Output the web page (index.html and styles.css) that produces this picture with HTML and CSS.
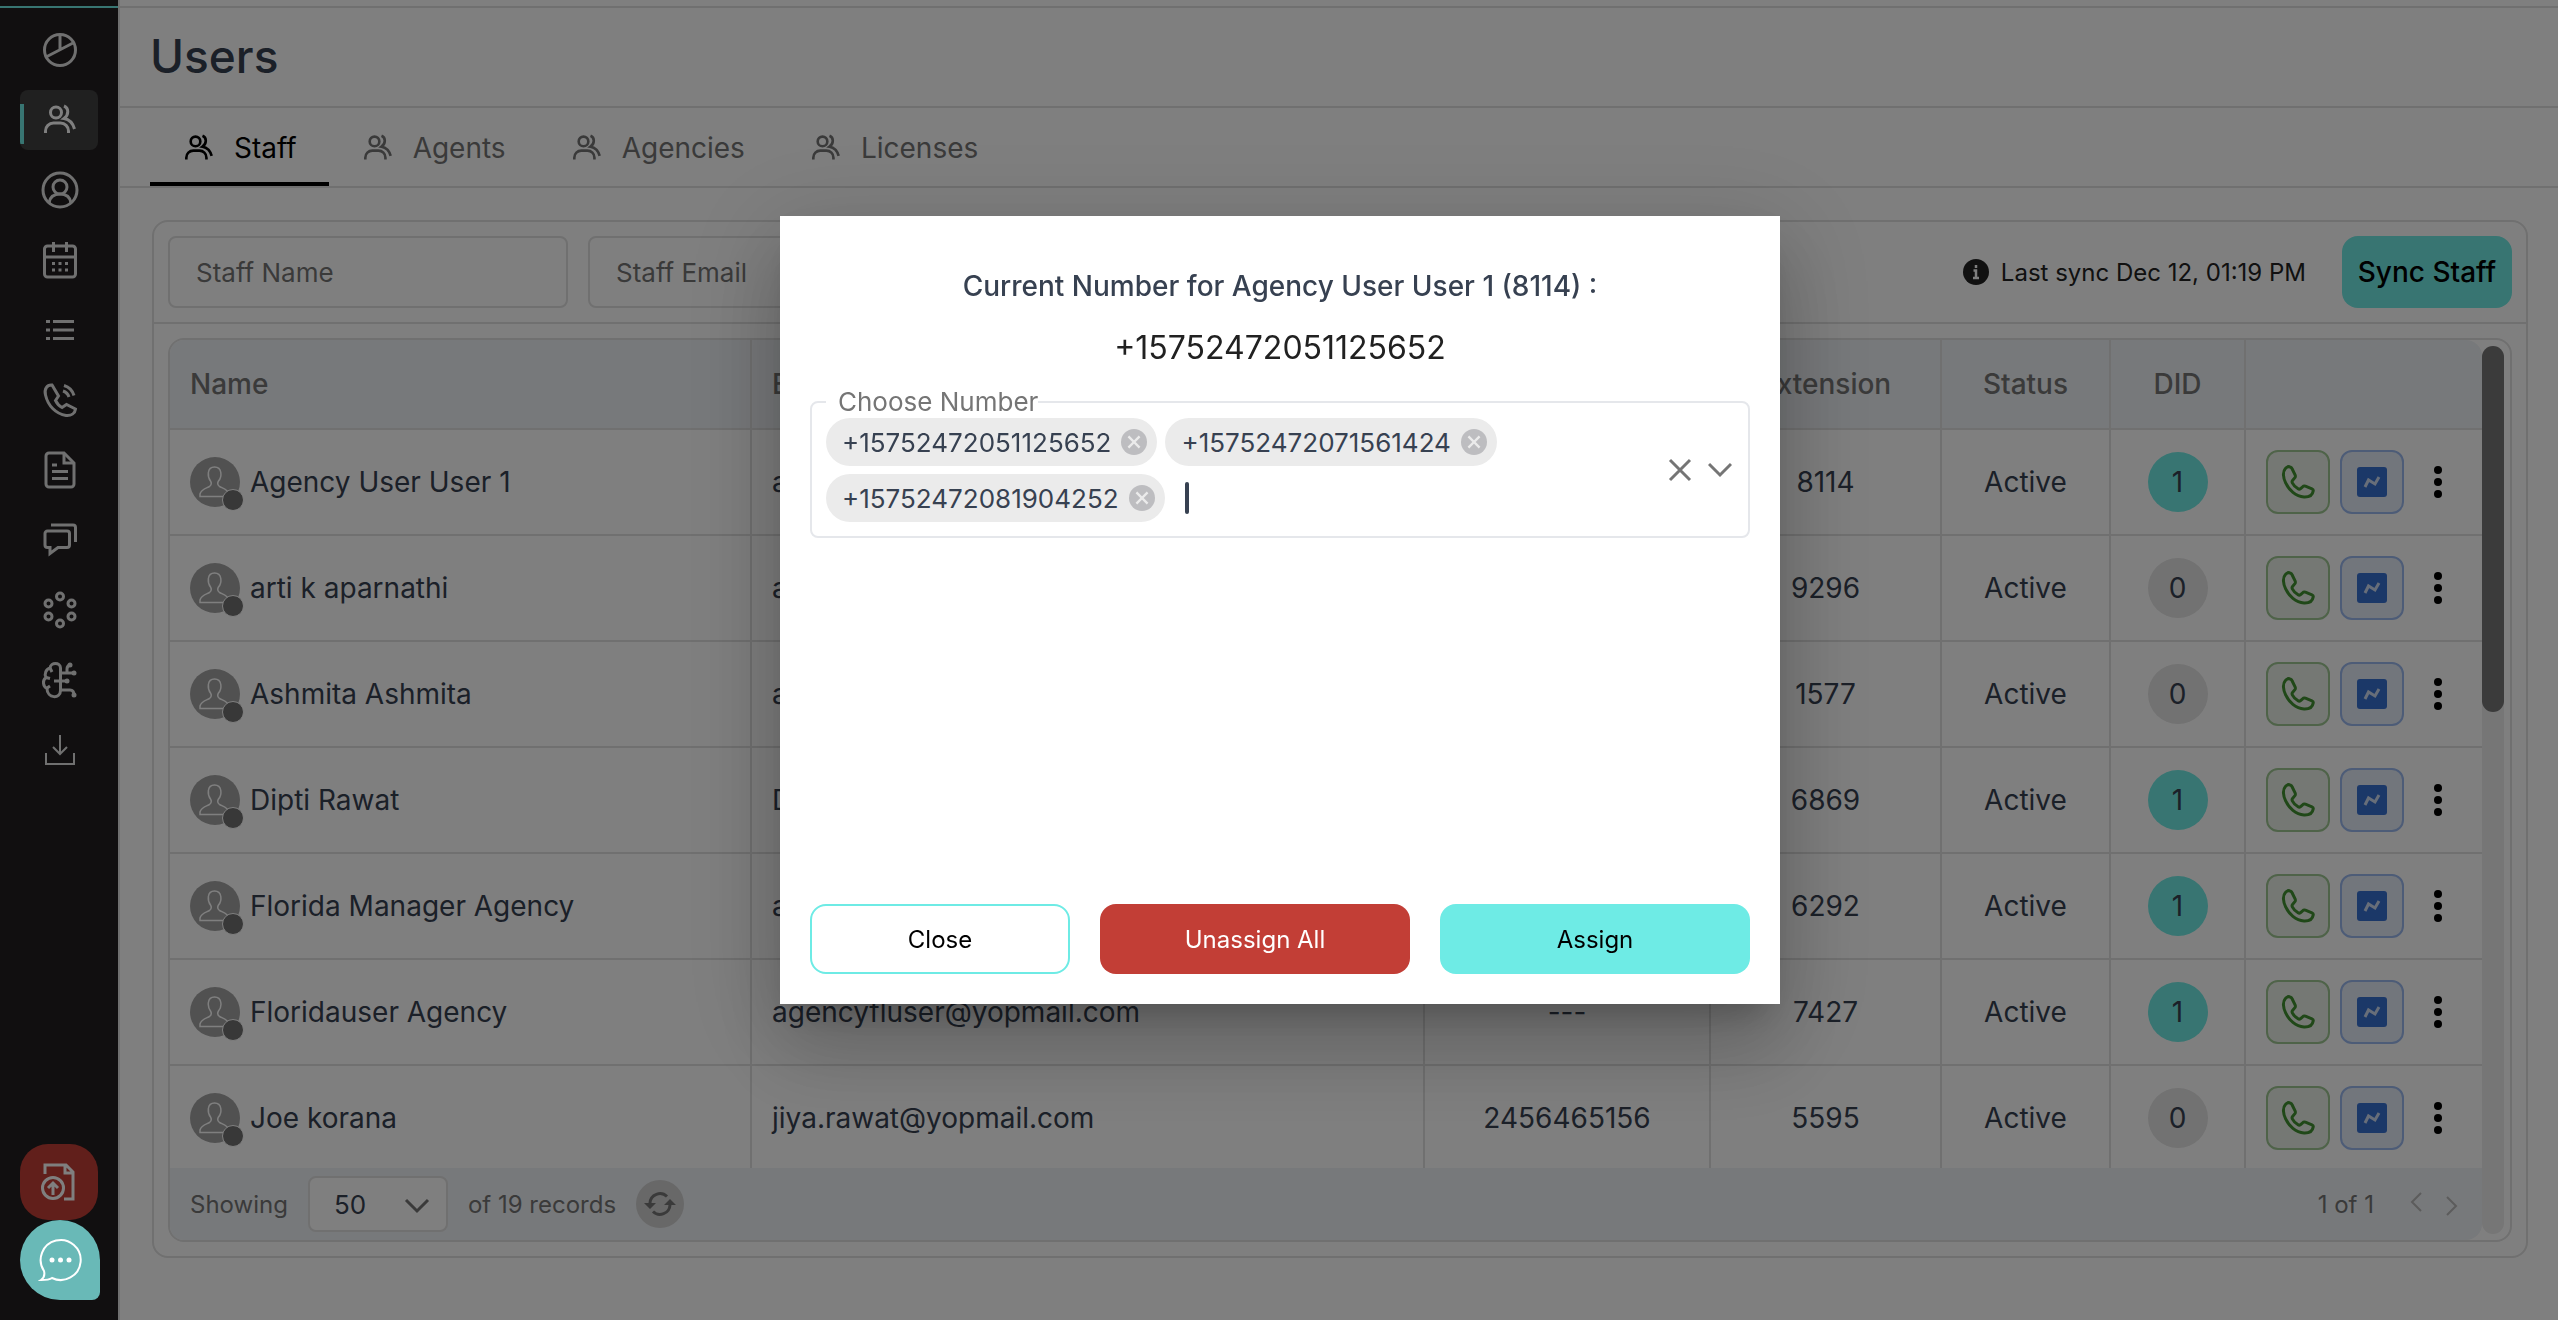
FILE: index.html
```
<!DOCTYPE html>
<html lang="en">
<head>
<meta charset="UTF-8" />
<meta name="viewport" content="width=device-width, initial-scale=1" />
<title>Users</title>
<link rel="stylesheet" href="styles.css">
</head>
<body>

<!-- shared icons -->
<svg class="sprite" aria-hidden="true">
  <symbol id="i-users" viewBox="0 0 32 32">
    <g fill="none" stroke="currentColor" stroke-width="3">
      <circle cx="12" cy="8.500" r="5.500"/>
      <path d="M1.500 29v-2a8 8 0 0 1 8-8h7a8 8 0 0 1 8 8v2"/>
      <path d="M20 2c5 2 5 9 0 12.500c6 1 9 5 10.500 10.500"/>
    </g>
  </symbol>
  <symbol id="i-phone" viewBox="0 0 34 34">
    <path d="M9.500 2.200c-1.400-.8-3.600-.5-5.100 1.200C1.500 6.500 2 13 4.800 18.200C8 25 14.500 31.500 23 32c5 .2 8.600-2 9.200-6c.2-1-.2-1.800-1.200-2.200l-6.600-2.600c-1-.4-2-.2-2.800.6l-2 1.800c-.8.6-1.600.8-2.500.2c-2.600-1.600-4.600-3.600-5.800-6c-.5-1-.3-1.800.4-2.600l2.200-2.600c.6-.8.6-1.600.3-2.500L11.200 4c-.3-.8-.8-1.400-1.700-1.800z" fill="none" stroke="currentColor" stroke-width="3" stroke-linejoin="round"/>
  </symbol>
  <symbol id="i-msg" viewBox="0 0 30 30">
    <rect width="30" height="30" rx="3" fill="#3670d0"/>
    <path d="M8 20l3.500-7l6.500 4l4-7" fill="none" stroke="#cfdcf2" stroke-width="3"/>
  </symbol>
  <symbol id="i-dots" viewBox="0 0 8 32">
    <circle cx="4" cy="4" r="4"/><circle cx="4" cy="16" r="4"/><circle cx="4" cy="28" r="4"/>
  </symbol>
  <symbol id="i-avatar" viewBox="0 0 50 50">
    <circle cx="25" cy="25" r="25" fill="#a3a3a3"/>
    <path d="M20.500 24c-3-4-4-14 4-14s7.500 10 4 14c-1.500 2.500-1 4 1 5.500c4 2 8.500 3 9.500 7.500v2.500H10V37c1-4.500 5.500-5.500 9.500-7.500c2-1.500 2.500-3 1-5.500z" fill="none" stroke="#fff" stroke-width="1.500"/>
  </symbol>
  <symbol id="i-clear" viewBox="0 0 28 28">
    <circle cx="14" cy="14" r="14" fill="#bdbdc0"/>
    <path d="M8 8l12 12M20 8L8 20" stroke="#ebebeb" stroke-width="2.500"/>
  </symbol>
</svg>

<div class="layout">
  <nav class="sidebar" aria-label="Main">
    <a href="#" aria-label="Dashboard"><svg viewBox="0 0 40 40"><g class="line"><circle cx="20" cy="20" r="15.500"/><path d="M20 4v16M6 27L33 13"/></g></svg></a>
    <a href="#" class="active" aria-label="Users"><svg class="users"><use href="#i-users"/></svg></a>
    <a href="#" aria-label="Profile"><svg viewBox="0 0 40 40"><g class="line"><circle cx="20" cy="20" r="17"/><circle cx="20" cy="17" r="7"/><path d="M9 33c1-7 6-9 11-9s10 2 11 9"/></g></svg></a>
    <a href="#" aria-label="Calendar"><svg viewBox="0 0 40 40"><g class="line"><rect x="4.500" y="6" width="31" height="31" rx="3"/><path d="M4 17h32M13.500 2v10M26.500 2v10"/><path d="M12 23.500h3M18.500 23.500h3M25 23.500h3M12 30h3M18.500 30h3M25 30h3"/></g></svg></a>
    <a href="#" aria-label="Lists"><svg viewBox="0 0 40 40"><path class="line" d="M6 11.500h4M13 11.500h21M6 20h4M13 20h21M6 28.500h4M13 28.500h21"/></svg></a>
    <a href="#" aria-label="Calls"><svg viewBox="0 0 40 40"><g class="line"><path d="M12 5c-5-.5-8 4-6.500 10C8 26 16 34 26 35.500c5 .5 9-2 9.500-6.500l-9-4.500-4.500 3c-3-1.500-5-4-6.500-7l3-4.500z"/><path d="M23 11c3 1 5 3 6 6M24 5.500c5 1.500 8.500 5 10 10"/></g></svg></a>
    <a href="#" aria-label="Documents"><svg viewBox="0 0 40 40"><g class="line"><path d="M24 3H9a3 3 0 0 0-3 3v28a3 3 0 0 0 3 3h22a3 3 0 0 0 3-3V13z"/><path d="M24 3v10h10M12 15h5M12 21.500h16M12 28.500h16"/></g></svg></a>
    <a href="#" aria-label="Messages"><svg viewBox="0 0 40 40"><g class="line"><path d="M7.500 11H27a2.500 2.500 0 0 1 2.500 2.500V25a2.500 2.500 0 0 1-2.500 2.500H18l-8 6v-6H7.500A2.500 2.500 0 0 1 5 25V13.500A2.500 2.500 0 0 1 7.500 11z"/><path d="M11 5h22a2.500 2.500 0 0 1 2.500 2.500V22"/></g></svg></a>
    <a href="#" aria-label="Groups"><svg viewBox="0 0 40 40"><g class="line"><circle cx="20" cy="6.500" r="3.500"/><circle cx="31.500" cy="13.500" r="3.500"/><circle cx="31.500" cy="26.500" r="3.500"/><circle cx="20" cy="33.500" r="3.500"/><circle cx="8.500" cy="26.500" r="3.500"/><circle cx="8.500" cy="13.500" r="3.500"/></g></svg></a>
    <a href="#" aria-label="AI"><svg viewBox="0 0 40 40"><g class="line"><path d="M20.500 8c0-6-10-6-10.500 0c-4 1-6 6-4 9.500c-4 3-3 9 1 11c0 10 13.500 11 13.500 2z"/><path d="M10 8l2 4M6 17.500l4 1M7 28l3-2M20 13h14M27 13V9q0-3 3-4M14 21h13M20 30h10q4 0 4 5"/></g><g fill="currentColor"><circle cx="30" cy="5" r="2.500"/><circle cx="34" cy="13" r="2.500"/><circle cx="27" cy="21" r="2.500"/><circle cx="34" cy="35" r="2.500"/></g></svg></a>
    <a href="#" aria-label="Downloads"><svg viewBox="0 0 40 40"><path class="line thin" d="M20 5v19M13 17l7 7l7-7M6 23v11h28V23"/></svg></a>
  </nav>

  <main>
    <header><h1>Users</h1></header>

    <div class="tabs" role="tablist">
      <button class="tab selected" role="tab"><svg><use href="#i-users"/></svg>Staff</button>
      <button class="tab" role="tab"><svg><use href="#i-users"/></svg>Agents</button>
      <button class="tab" role="tab"><svg><use href="#i-users"/></svg>Agencies</button>
      <button class="tab" role="tab"><svg><use href="#i-users"/></svg>Licenses</button>
    </div>

    <section class="card">
      <div class="filters">
        <input type="text" placeholder="Staff Name" aria-label="Staff Name">
        <input type="text" placeholder="Staff Email" aria-label="Staff Email">
        <p class="sync-info">
          <svg viewBox="0 0 26 26"><circle cx="13" cy="13" r="13" fill="#222"/><path d="M13 6v3M10.500 11.500H13V19M10 19h6" fill="none" stroke="#fff" stroke-width="2.500"/></svg>
          Last sync Dec 12, 01:19 PM
        </p>
        <button class="sync">Sync Staff</button>
      </div>

      <div class="table-box">
        <div class="table-main">
          <div class="table-view">
            <table>
              <colgroup><col class="c-name"><col><col class="c-phone"><col class="c-ext"><col class="c-status"><col class="c-did"><col class="c-actions"></colgroup>
              <thead>
                <tr><th class="left">Name</th><th class="left">Email</th><th>Phone</th><th>Extension</th><th>Status</th><th>DID</th><th></th></tr>
              </thead>
              <tbody id="rows"></tbody>
            </table>
          </div>
          <footer>
            <label for="page-size">Showing</label>
            <span class="select">
              <select id="page-size"><option>50</option></select>
              <svg viewBox="0 0 26 16"><path d="M2 2l11 11L24 2"/></svg>
            </span>
            <span>of 19 records</span>
            <button class="refresh" aria-label="Refresh"><svg viewBox="0 0 32 32"><g fill="none" stroke="currentColor" stroke-width="3"><path d="M6 15a10 10 0 0 1 17-6.500M26 17a10 10 0 0 1-17 6.500"/></g><path fill="currentColor" d="M0 15h12l-6 6zM20 17h12l-6-6z"/></svg></button>
            <span class="pages">1 of 1</span>
            <button class="arrow" aria-label="Previous page"><svg viewBox="0 0 12 20"><path d="M11 1L2 10l9 9"/></svg></button>
            <button class="arrow next" aria-label="Next page"><svg viewBox="0 0 12 20"><path d="M1 1l9 9l-9 9"/></svg></button>
          </footer>
        </div>
        <div class="scrollbar"><div class="thumb"></div></div>
      </div>
    </section>
  </main>
</div>

<button class="export" aria-label="Export"><svg viewBox="0 0 36 40"><g fill="none" stroke="currentColor" stroke-width="3"><path d="M4 12V3h21l7 7v27h-9M24 3v8h8"/><circle cx="12" cy="26" r="10.500"/><path d="M12 33V21M7 26l5-5l5 5"/></g></svg></button>

<div class="overlay">
  <div class="modal" role="dialog" aria-labelledby="modal-title">
    <h2 id="modal-title">Current Number for Agency User User 1 (8114) :</h2>
    <p class="number">+15752472051125652</p>
    <fieldset>
      <legend>Choose Number</legend>
      <div class="chips">
        <span class="chip">+15752472051125652<button aria-label="Remove"><svg><use href="#i-clear"/></svg></button></span>
        <span class="chip">+15752472071561424<button aria-label="Remove"><svg><use href="#i-clear"/></svg></button></span>
        <span class="chip">+15752472081904252<button aria-label="Remove"><svg><use href="#i-clear"/></svg></button></span>
        <span class="caret"></span>
        <input type="text" aria-label="Choose Number">
      </div>
      <button class="icon-btn" aria-label="Clear"><svg viewBox="0 0 24 24"><path d="M2 2l20 20M22 2L2 22"/></svg></button>
      <button class="icon-btn" aria-label="Open"><svg viewBox="0 0 24 24"><path d="M1 6l11 11L23 6"/></svg></button>
    </fieldset>
    <div class="buttons">
      <button class="close">Close</button>
      <button class="unassign">Unassign All</button>
      <button class="assign">Assign</button>
    </div>
  </div>
</div>

<button class="chat" aria-label="Chat"><svg viewBox="0 0 44 44"><path d="M3 42c3-2 4-5 3-9A20 20 0 1 1 14 40c-3 2-6 2-11 2z" fill="none" stroke="#fff" stroke-width="2"/><g fill="#fff"><circle cx="14" cy="22" r="2.500"/><circle cx="22.500" cy="22" r="2.500"/><circle cx="31" cy="22" r="2.500"/></g></svg></button>

<script>
const staff = [
  ['Agency User User 1', 'agencyuser1@yopmail.com', '---', '8114', 1],
  ['arti k aparnathi', 'arti@yopmail.com', '---', '9296', 0],
  ['Ashmita Ashmita', 'ashmita@yopmail.com', '---', '1577', 0],
  ['Dipti Rawat', 'Dipti@yopmail.com', '---', '6869', 1],
  ['Florida Manager Agency', 'agencyflmanager@yopmail.com', '---', '6292', 1],
  ['Floridauser Agency', 'agencyfluser@yopmail.com', '---', '7427', 1],
  ['Joe korana', 'jiya.rawat@yopmail.com', '2456465156', '5595', 0]
];

document.getElementById('rows').innerHTML = staff.map(([name, email, phone, ext, did]) => `
  <tr>
    <td class="left"><div class="person"><span class="avatar"><svg><use href="#i-avatar"/></svg><i></i></span>${name}</div></td>
    <td class="left">${email}</td>
    <td>${phone}</td>
    <td>${ext}</td>
    <td>Active</td>
    <td><span class="did ${did ? 'on' : ''}">${did}</span></td>
    <td><div class="actions">
      <button class="call" aria-label="Call"><svg><use href="#i-phone"/></svg></button>
      <button class="msg" aria-label="Message"><svg><use href="#i-msg"/></svg></button>
      <button class="more" aria-label="More"><svg><use href="#i-dots"/></svg></button>
    </div></td>
  </tr>`).join('');
</script>

</body>
</html>
```
FILE: styles.css
```
* {
  box-sizing: border-box;
}
body {
  margin: 0;
  font-family: Inter, "Liberation Sans", sans-serif;
  font-size: 28px;
  color: #374151;
  background: #fff;
}
h1, h2, p {
  margin: 0;
}
button, input, select {
  font: inherit;
  color: inherit;
}
button {
  display: flex;
  align-items: center;
  justify-content: center;
  padding: 0;
  border: none;
  background: none;
  cursor: pointer;
}
svg {
  display: block;
  flex: none;
}
.sprite {
  position: absolute;
  width: 0;
  height: 0;
}
.layout {
  display: flex;
  height: 100vh;
}

/* sidebar */
.sidebar {
  display: flex;
  flex-direction: column;
  gap: 10px;
  width: 120px;
  flex: none;
  padding: 20px;
  background: linear-gradient(#70eae4, #70eae4) 0 6px / 100% 2px no-repeat #221e20;
  border-right: 2px solid #e0e0e0;
  color: #e0e0e0;
}
.sidebar a {
  display: flex;
  align-items: center;
  justify-content: center;
  height: 60px;
  color: inherit;
  border-radius: 8px;
}
.sidebar a.active {
  background: linear-gradient(#70eae4, #70eae4) 0 14px / 4px 40px no-repeat #404040;
  color: #fff;
}
.sidebar svg {
  width: 40px;
  height: 40px;
  margin-left: 2px;
}
.sidebar svg.users {
  width: 34px;
  height: 32px;
}
.line {
  fill: none;
  stroke: currentColor;
  stroke-width: 3;
}
.thin {
  stroke-width: 2;
}

main {
  flex: 1;
  min-width: 0;
  padding-top: 6px;
}
header {
  height: 102px;
  display: flex;
  align-items: center;
  padding: 0 32px 2px 30px;
  border: solid #e0e0e0;
  border-width: 2px 0;
}
h1 {
  font-size: 46px;
  font-weight: 500;
}

/* tabs */
.tabs {
  display: flex;
  height: 80px;
  padding-left: 30px;
  border-bottom: 2px solid #e0e0e0;
}
.tab {
  gap: 20px;
  padding: 6px 32px 0 34px;
  color: #757575;
  border-bottom: 4px solid transparent;
}
.tab.selected {
  color: #000;
  border-color: #000;
}
.tab svg {
  width: 30px;
  height: 28px;
}

/* card */
.card {
  margin: 32px 30px 0 32px;
  border: 2px solid #e0e0e0;
  border-radius: 16px;
}
.filters {
  display: flex;
  align-items: center;
  gap: 20px;
  padding: 14px;
  border-bottom: 2px solid #e0e0e0;
}
.filters input {
  width: 400px;
  height: 72px;
  padding: 0 26px;
  border: 2px solid #e0e0e0;
  border-radius: 8px;
  background: #fff;
  font-size: 26px;
}
.filters input::placeholder {
  color: #757575;
  opacity: 1;
}
.sync-info {
  display: flex;
  align-items: center;
  gap: 12px;
  margin-left: auto;
  margin-right: 16px;
  font-size: 24px;
  color: #222;
}
.sync-info svg {
  width: 26px;
  height: 26px;
}
.sync {
  width: 170px;
  height: 72px;
  border-radius: 16px;
  background: #70eae4;
  color: #000;
  font-weight: 500;
}

/* table */
.table-box {
  display: flex;
  margin: 14px;
  border: 2px solid #e0e0e0;
  border-radius: 16px;
  overflow: hidden;
}
.table-main {
  flex: 1;
  min-width: 0;
  border-radius: 0 16px 16px 0;
  overflow: hidden;
}
.table-view {
  height: 828px;
  overflow: hidden;
}
table {
  width: 100%;
  table-layout: fixed;
  border-collapse: separate;
  border-spacing: 0;
}
.c-name { width: 582px; }
.c-phone { width: 286px; }
.c-ext { width: 231px; }
.c-status { width: 169px; }
.c-did { width: 135px; }
.c-actions { width: 236px; }
th, td {
  padding: 0 20px;
  text-align: center;
  border: solid #e0e0e0;
  border-width: 0 2px 2px 0;
}
th:last-child, td:last-child {
  border-right: none;
}
th {
  height: 90px;
  background: #eff2f6;
  color: #757575;
  font-weight: 500;
}
td {
  height: 106px;
}
.left {
  text-align: left;
}
.person {
  display: flex;
  align-items: center;
  gap: 10px;
}
.avatar {
  position: relative;
}
.avatar svg {
  width: 50px;
  height: 50px;
}
.avatar i {
  position: absolute;
  right: -4px;
  bottom: -4px;
  width: 22px;
  height: 22px;
  border: 1px solid #fff;
  border-radius: 50%;
  background: #707070;
}
.did {
  display: block;
  width: 60px;
  margin: 0 auto;
  line-height: 60px;
  border-radius: 50%;
  background: #e4e4e4;
}
.did.on {
  background: #70eae4;
}
.actions {
  display: flex;
  gap: 10px;
}
.actions button {
  width: 64px;
  height: 64px;
  border-radius: 12px;
}
.actions .call {
  border: 2px solid #9ec692;
  background: #ebf0e9;
  color: #409030;
}
.actions .msg {
  border: 2px solid #9ab8ee;
  background: #e4ecf8;
}
.actions .more {
  width: 48px;
}
.call svg {
  width: 34px;
  height: 34px;
}
.msg svg {
  width: 30px;
  height: 30px;
}
.more svg {
  width: 8px;
  height: 32px;
}
.scrollbar {
  width: 22px;
  margin: 6px 6px 6px 0;
  border-radius: 11px;
  background: #ececec;
}
.thumb {
  height: 366px;
  border-radius: 11px;
  background: #767676;
}

/* table footer */
footer {
  display: flex;
  align-items: center;
  height: 72px;
  gap: 20px;
  padding: 0 24px 0 20px;
  background: #eff2f6;
  color: #757575;
  font-size: 24px;
}
.select {
  position: relative;
}
.select select {
  appearance: none;
  display: block;
  width: 140px;
  height: 56px;
  padding: 0 24px;
  border: 2px solid #e0e0e0;
  border-radius: 8px;
  background: #fff;
  color: #374151;
  font-size: 26px;
}
.select svg {
  position: absolute;
  right: 18px;
  top: 22px;
  width: 26px;
  height: 16px;
}
.select path, .arrow path, .icon-btn path {
  fill: none;
  stroke: currentColor;
  stroke-width: 3;
}
.refresh {
  width: 48px;
  height: 48px;
  border-radius: 50%;
  background: #d0d0d0;
}
.refresh svg {
  width: 32px;
  height: 32px;
}
.pages {
  margin-left: auto;
  margin-right: 16px;
}
.arrow {
  width: 12px;
  height: 20px;
  margin-bottom: 4px;
  color: #b8b8b8;
}
.arrow.next {
  margin: 4px 0 0 4px;
}
.arrow svg {
  width: 12px;
  height: 20px;
}
.arrow path {
  stroke-width: 2;
}

/* floating buttons */
.export {
  position: fixed;
  left: 20px;
  bottom: 100px;
  width: 78px;
  height: 76px;
  border-radius: 28px;
  background: #c23e36;
  color: #fff;
}
.export svg {
  width: 36px;
  height: 40px;
}
.chat {
  position: fixed;
  left: 20px;
  bottom: 20px;
  width: 80px;
  height: 80px;
  border-radius: 40px 40px 8px 40px;
  background: #69b9b7;
}
.chat svg {
  width: 44px;
  height: 44px;
}

/* modal */
.overlay {
  position: fixed;
  inset: 0;
  display: flex;
  justify-content: center;
  align-items: flex-start;
  padding: 216px 0 0 2px;
  background: rgba(0, 0, 0, 0.5);
}
.modal {
  display: flex;
  flex-direction: column;
  width: 1000px;
  height: 788px;
  padding: 50px 30px 30px;
  background: #fff;
  box-shadow: 0 22px 30px -14px rgba(0, 0, 0, 0.2), 0 48px 76px 6px rgba(0, 0, 0, 0.14), 0 18px 92px 16px rgba(0, 0, 0, 0.12);
}
h2 {
  font-size: 28px;
  font-weight: 500;
  line-height: 40px;
  text-align: center;
}
.number {
  margin-top: 18px;
  font-size: 32px;
  line-height: 48px;
  text-align: center;
  color: #212121;
}
fieldset {
  display: flex;
  align-items: center;
  gap: 16px;
  min-width: 0;
  margin: 14px 0 0;
  padding: 0 16px 14px 14px;
  border: 2px solid #e5e7eb;
  border-radius: 8px;
}
legend {
  padding: 0 0 0 12px;
  line-height: 32px;
  font-size: 26px;
  color: #757575;
}
.chips {
  flex: 1;
  display: flex;
  flex-wrap: wrap;
  align-items: center;
  gap: 8px;
}
.chip {
  display: flex;
  align-items: center;
  gap: 10px;
  height: 48px;
  padding: 0 10px 0 16px;
  border-radius: 24px;
  background: #ebebeb;
  font-size: 26px;
}
.chip svg {
  width: 26px;
  height: 26px;
}
.caret {
  width: 4px;
  height: 32px;
  margin-left: 12px;
  border-radius: 2px;
  background: #374151;
}
.chips input {
  flex: 1;
  width: 60px;
  height: 32px;
  padding: 0;
  border: none;
  outline: none;
  font-size: 26px;
}
.icon-btn, .icon-btn svg {
  width: 24px;
  height: 24px;
  color: #757575;
}
.buttons {
  display: flex;
  gap: 30px;
  margin-top: auto;
}
.buttons button {
  flex: 1;
  height: 70px;
  border-radius: 16px;
  font-size: 24px;
  color: #000;
}
.buttons .close {
  flex: none;
  width: 260px;
  border: 2px solid #6eebe5;
  background: #fff;
}
.buttons .unassign {
  background: #c23e36;
  color: #fff;
}
.buttons .assign {
  background: #6eebe5;
}
```
